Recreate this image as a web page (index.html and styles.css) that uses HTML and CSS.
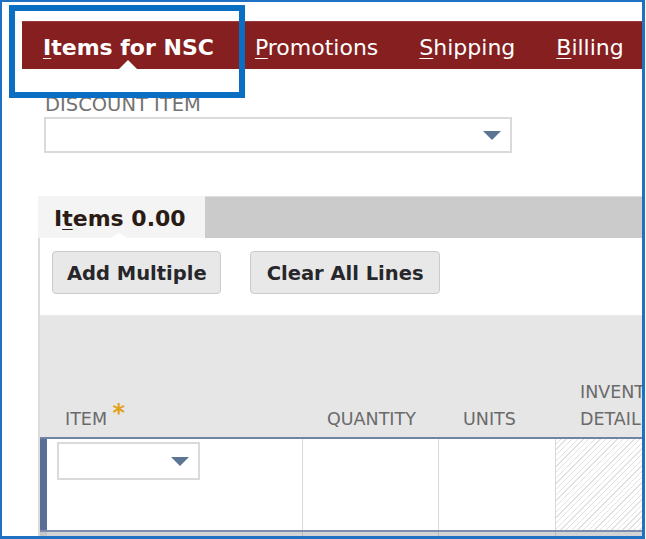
FILE: index.html
```html
<!DOCTYPE html>
<html>
<head>
<meta charset="utf-8">
<link rel="stylesheet" href="styles.css">
</head>
<body>
<div class="frame">
  <nav class="tabbar">
    <span class="tab active"><u>I</u>tems for NSC</span>
    <span class="tab"><u>P</u>romotions</span>
    <span class="tab"><u>S</u>hipping</span>
    <span class="tab"><u>B</u>illing</span>
  </nav>

  <div class="field">
    <div class="field-label">DISCOUNT ITEM</div>
    <div class="select wide"><span class="arrow"></span></div>
  </div>

  <div class="subtabs">
    <div class="subtab">I<u>t</u>ems 0.00</div>
    <div class="subtab-rest"></div>
  </div>

  <div class="panel">
    <div class="buttons">
      <button class="btn">Add Multiple</button>
      <button class="btn wide-btn">Clear All Lines</button>
    </div>
    <div class="grid-head">
      <div class="hcell c1">ITEM <span class="req">*</span></div>
      <div class="hcell c2">QUANTITY</div>
      <div class="hcell c3">UNITS</div>
      <div class="hcell c4">INVENTORY DETAIL</div>
    </div>
    <div class="grid-row">
      <div class="cell c1"><div class="select small"><span class="arrow"></span></div></div>
      <div class="cell c2"></div>
      <div class="cell c3"></div>
      <div class="cell c4 hatched"></div>
    </div>
    <div class="grid-foot">
      <div class="fcell c1"></div>
      <div class="fcell c2"></div>
      <div class="fcell c3"></div>
      <div class="fcell c4"></div>
    </div>
  </div>

  <div class="highlight"></div>
</div>
</body>
</html>
```

FILE: styles.css
```css
html, body {
  margin: 0;
  padding: 0;
  background: #ffffff;
}

body {
  font-family: "DejaVu Sans", Verdana, sans-serif;
}

.frame {
  position: relative;
  width: 645px;
  height: 539px;
  box-sizing: border-box;
  border-style: solid;
  border-color: #1f72c3;
  border-width: 2px 3px 3px 2px;
  overflow: hidden;
  background: #ffffff;
}

/* top tab bar */
.tabbar {
  margin: 19px 0 0 20px;
  height: 48px;
  background: #861f1f;
  display: flex;
  align-items: stretch;
  gap: 41px;
  padding-left: 21px;
  border-top: 1px solid #9b3a3a;
  box-sizing: border-box;
}

.tab {
  position: relative;
  box-sizing: border-box;
  height: 47px;
  padding-top: 4px;
  color: #ffffff;
  font-size: 22px;
  line-height: 43px;
  white-space: nowrap;
}

.tab u {
  text-decoration-thickness: 1px;
  text-underline-offset: 3px;
}

.tab.active {
  font-weight: bold;
}

.tab.active::after {
  content: "";
  position: absolute;
  left: 50%;
  bottom: 0;
  margin-left: -9px;
  width: 0;
  height: 0;
  border-left: 9px solid transparent;
  border-right: 9px solid transparent;
  border-bottom: 9px solid #ffffff;
}

/* discount field */
.field {
  margin: 25px 0 0 42px;
}

.field-label {
  font-size: 19.5px;
  line-height: 22px;
  color: #737373;
  padding-left: 1px;
  margin-bottom: 1px;
}

.select {
  position: relative;
  box-sizing: border-box;
  border: 2px solid #dadada;
  background: #ffffff;
}

.select.wide {
  width: 468px;
  height: 36px;
}

.select.small {
  width: 143px;
  height: 38px;
}

.arrow {
  position: absolute;
  top: 50%;
  right: 9px;
  margin-top: -4px;
  width: 0;
  height: 0;
  border-left: 9px solid transparent;
  border-right: 9px solid transparent;
  border-top: 9px solid #5d7594;
}

/* sub tabs */
.subtabs {
  display: flex;
  margin: 43px 0 0 36px;
  height: 42px;
}

.subtab {
  position: relative;
  width: 167px;
  box-sizing: border-box;
  background: #f4f4f4;
  padding: 3px 0 0 16px;
  font-size: 22px;
  font-weight: bold;
  line-height: 39px;
  color: #2a1c14;
  white-space: nowrap;
}

.subtab u {
  text-decoration-thickness: 1px;
  text-underline-offset: 3px;
}

.subtab::after {
  content: "";
  position: absolute;
  left: 72px;
  bottom: 0;
  width: 0;
  height: 0;
  border-left: 9px solid transparent;
  border-right: 9px solid transparent;
  border-bottom: 5px solid #ffffff;
}

.subtab-rest {
  flex: 1;
  background: #cbcbcb;
  border-top: 1px solid #dedede;
}

/* panel */
.panel {
  margin-left: 36px;
  border-left: 2px solid #dcdcdc;
  padding-top: 13px;
}

.buttons {
  display: flex;
  gap: 29px;
  padding-left: 12px;
  margin-bottom: 21px;
}

.btn {
  height: 43px;
  box-sizing: border-box;
  padding: 2px 13px 0 14px;
  font-family: "DejaVu Sans", Verdana, sans-serif;
  font-size: 19.5px;
  font-weight: bold;
  color: #27262a;
  background: #e8e8e8;
  border: 1px solid #cbcbcb;
  border-radius: 4px;
}

.btn.wide-btn {
  padding: 2px 15px 0 16px;
}

.grid-head,
.grid-row,
.grid-foot {
  display: grid;
  grid-template-columns: 263px 136px 117px 180px;
}

.grid-head {
  height: 122px;
  background: #e6e6e6;
  border-top: 1px solid #ececec;
  box-sizing: border-box;
}

.hcell {
  align-self: end;
  padding: 0 0 4px 24px;
  font-size: 17.5px;
  line-height: 27px;
  color: #6a6a6a;
}

.hcell.c1 {
  padding-left: 25px;
}

.hcell.c4 {
  padding-right: 30px;
}

.req {
  color: #e3a21a;
  font-size: 24px;
  font-weight: bold;
  vertical-align: 4px;
  line-height: 0;
}

.grid-row {
  height: 95px;
  box-sizing: border-box;
  border-top: 2px solid #6f83a5;
  border-bottom: 2px solid #7c8eac;
  background: #ffffff;
}

.cell {
  border-right: 1px solid #d9d9d9;
}

.cell.c1 {
  border-left: 7px solid #5a6f96;
  padding: 3px 0 0 10px;
}

.hatched {
  background: repeating-linear-gradient(135deg, #ffffff 0, #ffffff 3px, #e2e2e2 3px, #e2e2e2 4px);
}

.grid-foot {
  height: 10px;
  background: #d4d4d4;
}

.fcell {
  border-right: 1px solid #bcbcbc;
}

.fcell.c1 {
  border-left: 7px solid #c6c6c6;
}

/* annotation overlay */
.highlight {
  position: absolute;
  left: 7px;
  top: 3px;
  width: 236px;
  height: 93px;
  box-sizing: border-box;
  border: 6px solid #0a6fc2;
}
```
